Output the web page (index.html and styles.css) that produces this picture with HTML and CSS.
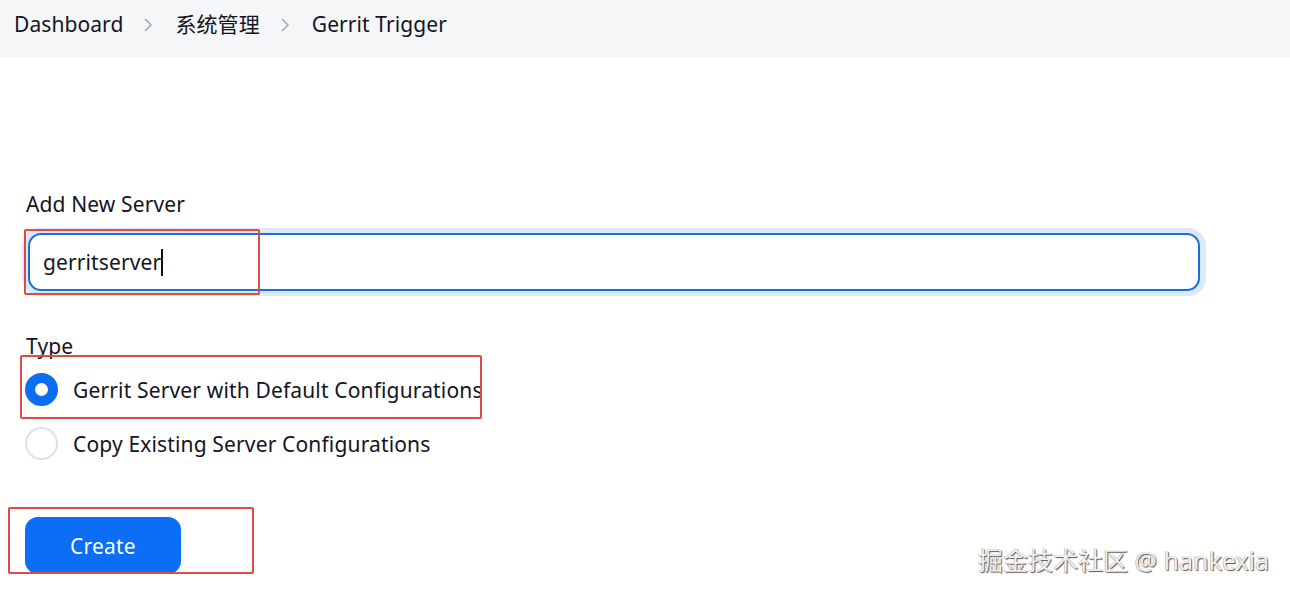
FILE: index.html
```html
<!DOCTYPE html>
<html lang="zh-CN">
<head>
<meta charset="utf-8">
<title>Gerrit Trigger</title>
<link rel="stylesheet" href="styles.css">
</head>
<body>
<header class="topbar">
  <nav class="crumbs">
    <span class="crumb">Dashboard</span>
    <svg class="chev" viewBox="0 0 10 16" width="10" height="16"><path d="M2.5 2.5l5.5 5.5-5.5 5.5" fill="none" stroke="#a4abb8" stroke-width="1.7" stroke-linecap="round" stroke-linejoin="round"/></svg>
    <span class="crumb">系统管理</span>
    <svg class="chev" viewBox="0 0 10 16" width="10" height="16"><path d="M2.5 2.5l5.5 5.5-5.5 5.5" fill="none" stroke="#a4abb8" stroke-width="1.7" stroke-linecap="round" stroke-linejoin="round"/></svg>
    <span class="crumb">Gerrit Trigger</span>
  </nav>
</header>
<main class="content">
  <form class="form">
    <label class="label">Add New Server</label>
    <div class="field">
      <div class="input"><span class="value">gerritserver</span><span class="caret"></span></div>
    </div>
    <div class="label type-label">Type</div>
    <div class="radios">
      <div class="radio-row"><span class="radio checked"></span><span class="radio-text">Gerrit Server with Default Configurations</span></div>
      <div class="radio-row"><span class="radio"></span><span class="radio-text">Copy Existing Server Configurations</span></div>
    </div>
    <div class="actions"><button type="button" class="btn">Create</button></div>
  </form>
</main>
<div class="mark mark-input"></div>
<div class="mark mark-radio"></div>
<div class="mark mark-btn"></div>
<div class="watermark">掘金技术社区 @ hankexia</div>
</body>
</html>
```
FILE: styles.css
```css
* { box-sizing: border-box; }
html, body { margin: 0; padding: 0; }
body {
  width: 1290px;
  height: 593px;
  overflow: hidden;
  background: #ffffff;
  font-family: "Noto Sans", "Noto Sans CJK SC", sans-serif;
  color: #14141f;
  position: relative;
}
.topbar {
  height: 57px;
  background: #f5f6f8;
  display: flex;
  align-items: center;
  padding-left: 14px;
}
.crumbs {
  display: flex;
  align-items: center;
  font-size: 21px;
  letter-spacing: 0.08px;
  margin-top: -10px;
}
.crumb { line-height: 26px; }
.chev { margin: 2px 22px 0 20px; }
.content { padding: 134px 0 0 26px; }
.form { display: flex; flex-direction: column; }
.label { font-size: 21px; line-height: 26px; letter-spacing: 0.12px; }
.field {
  margin: 11px 0 0 -4px;
  width: 1184px;
  padding: 5px 6px;
  border-radius: 18px;
  background: #dce8fb;
}
.input {
  height: 58px;
  border: 2px solid #1a6fdc;
  border-radius: 13px;
  background: #fff;
  display: flex;
  align-items: center;
  padding-left: 13px;
  font-size: 21px;
  letter-spacing: 0.12px;
}
.caret { width: 2px; height: 27px; background: #111; margin-left: 0; }
.type-label { margin-top: 37px; }
.radios { display: flex; flex-direction: column; gap: 21px; margin-top: 14px; }
.radio-row { display: flex; align-items: center; gap: 15px; margin-left: -1px; }
.radio {
  width: 33px; height: 33px;
  border-radius: 50%;
  border: 2px solid #dde1e8;
  background: #fff;
  flex: none;
}
.radio.checked { border: 10px solid #0b6ef0; }
.radio-text { font-size: 21px; line-height: 26px; letter-spacing: 0.15px; }
.actions { margin-top: 57px; }
.btn {
  width: 156px;
  height: 57px;
  border: none;
  border-radius: 13px;
  background: #0b6ef5;
  color: #fff;
  font-family: inherit;
  font-size: 21px;
  letter-spacing: 0.2px;
  margin-left: -1px;
  padding: 0;
}
.mark {
  position: absolute;
  border: 2px solid #e04a40;
  border-radius: 2px;
}
.mark-input { left: 24px; top: 229px; width: 236px; height: 66px; }
.mark-radio { left: 20px; top: 355px; width: 462px; height: 64px; }
.mark-btn { left: 8px; top: 507px; width: 246px; height: 67px; }
.watermark {
  position: absolute;
  left: 978px;
  top: 541px;
  font-size: 25px;
  color: #f0f0f0;
  text-shadow: 1px 1px 1px #555, -0.5px -0.5px 0 #aaa;
  letter-spacing: 0;
}
```
